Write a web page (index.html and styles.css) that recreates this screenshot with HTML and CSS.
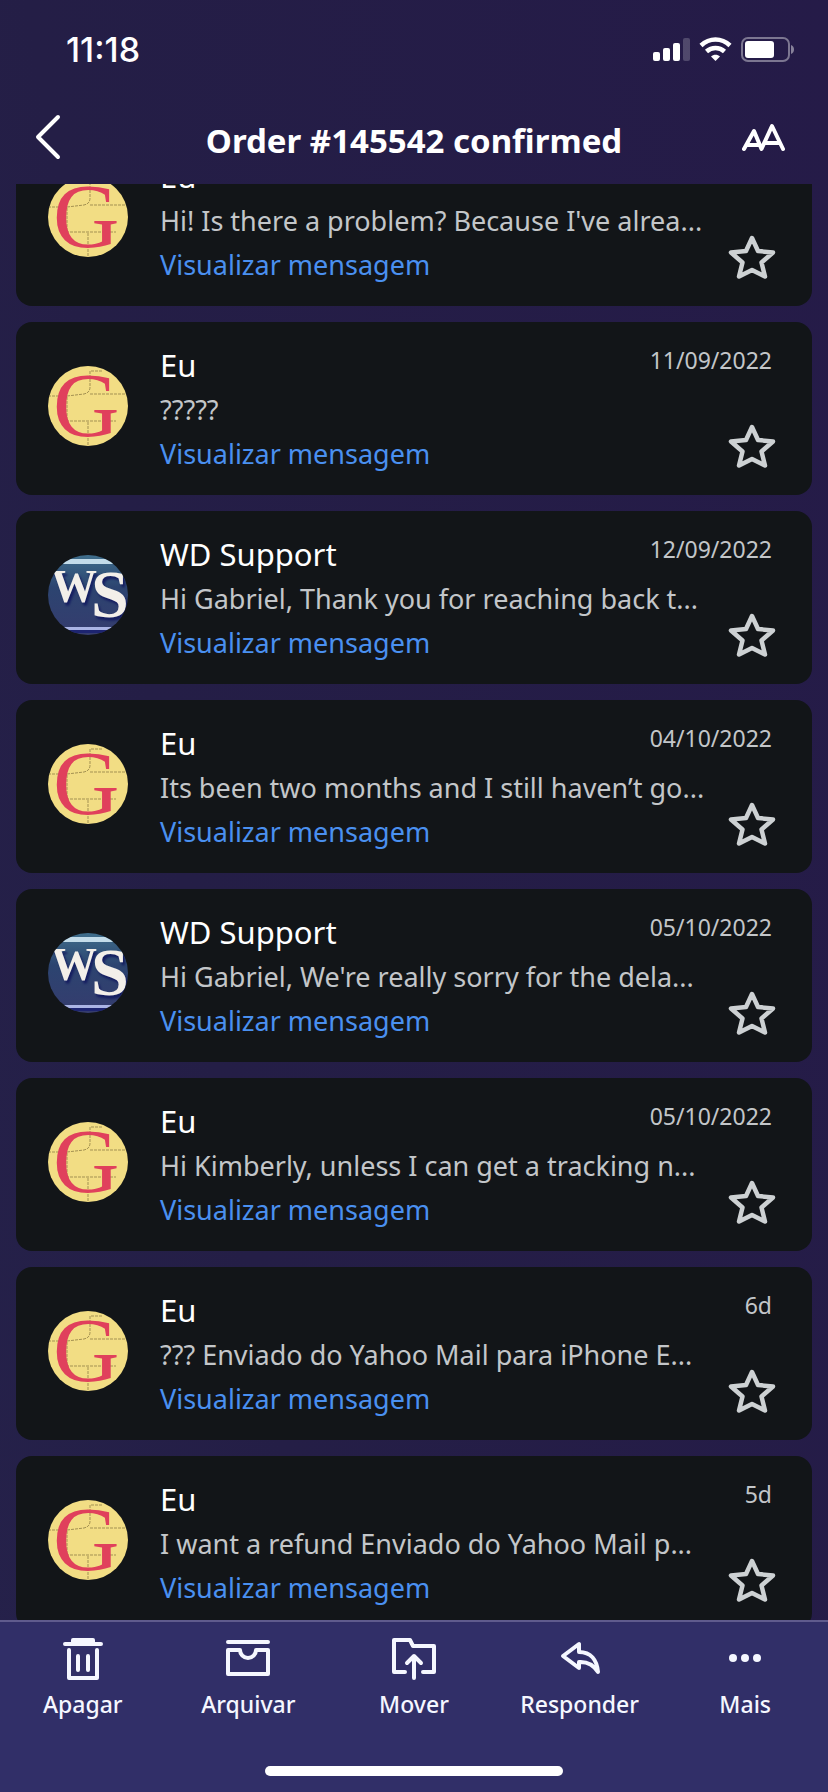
FILE: index.html
```
<!DOCTYPE html>
<html lang="pt">
  <head>
    <meta charset="UTF-8" />
    <meta name="viewport" content="width=device-width, initial-scale=1.0" />
    <title>Order #145542 confirmed</title>
    <link rel="stylesheet" href="styles.css">
  </head>
  <body>
    <!-- Shared drawings -->
    <svg class="defs" aria-hidden="true">
      <symbol id="star" viewBox="0 0 48 48">
        <path d="M24 5l6 13 15 1.500-11.500 10 3.500 14-13-6.500-13 6.500 3.500-14L3 19.500 18 18z" fill="none" stroke="#cdd1d3" stroke-width="4.500" stroke-linejoin="round" />
      </symbol>
      <symbol id="bricks" viewBox="0 0 80 80">
        <path d="M0 0h80v80H0z" fill="#f2dd84" />
        <path d="M0 30h20M54 5H42v16c0 4-2 6-6 7l-17 2v24M42 28h38M14 55h54M40 56v24" fill="none" stroke="#a39152" stroke-width="1" stroke-dasharray="3 1" />
      </symbol>
      <symbol id="wall" viewBox="0 0 80 80">
        <linearGradient id="wall-fill" x1="0" y1="0" x2="0" y2="1">
          <stop offset="0" stop-color="#3f6e8c" />
          <stop offset="0.400" stop-color="#2c4470" />
          <stop offset="1" stop-color="#353c6e" />
        </linearGradient>
        <path d="M0 0h80v80H0z" fill="url(#wall-fill)" />
        <path d="M0 4h80v5H0z" fill="#c3dcea" />
        <path d="M0 72h80v3H0z" fill="#aab4e4" />
        <path d="M0 75h80v3H0z" fill="#1d2470" />
      </symbol>
    </svg>

    <div class="app">
      <header>
        <div class="status-bar">
          <span class="time">11:18</span>
          <svg width="144" height="28" viewBox="0 0 144 28" aria-hidden="true">
            <g fill="#fff">
              <rect x="1" y="16" width="7" height="9" rx="2" />
              <rect x="11" y="12" width="7" height="13" rx="2" />
              <rect x="21" y="7" width="7" height="18" rx="2" />
              <rect x="31" y="2" width="7" height="23" rx="2" opacity="0.2" />
              <path d="M63.500 25l-4.500-4.500c2.500-2.200 6.500-2.200 9 0z" />
              <rect x="93" y="5" width="29" height="17" rx="3" />
              <path d="M139 9c4 1.500 4 7.500 0 9z" opacity="0.45" />
            </g>
            <g fill="none" stroke="#fff">
              <path d="M49 9.500c8.500-8 20.500-8 29 0M54.500 15.500c5.200-4.800 12.800-4.800 18 0" stroke-width="4.500" />
              <rect x="90" y="2" width="47" height="23" rx="6" stroke-width="2" opacity="0.4" />
            </g>
          </svg>
        </div>
        <div class="nav-bar">
          <button type="button" class="icon-button" aria-label="Voltar">
            <svg width="52" height="56" viewBox="0 0 52 56"><path d="M24 5L4 25l20 20" /></svg>
          </button>
          <h1>Order #145542 confirmed</h1>
          <button type="button" class="icon-button" aria-label="Tamanho do texto">
            <svg width="52" height="56" viewBox="0 0 52 56"><path d="M2 37l10-18 7.500 18L30 14l11 23M6 33h12M22 31h16" /></svg>
          </button>
        </div>
      </header>

      <main id="messages">
        <ul class="list">
          <li class="card">
            <svg class="avatar" viewBox="0 0 80 80" aria-hidden="true"><use href="#bricks" /><text class="letter-g" x="5" y="70">G</text></svg>
            <div class="body">
              <div class="top"><h2>Eu</h2><time>10/09/2022</time></div>
              <div class="bottom">
                <div class="text">
                  <p>Hi! Is there a problem? Because I've alrea...</p>
                  <a href="#">Visualizar mensagem</a>
                </div>
                <button type="button" class="star" aria-label="Favorito"><svg><use href="#star" /></svg></button>
              </div>
            </div>
          </li>
          <li class="card">
            <svg class="avatar" viewBox="0 0 80 80" aria-hidden="true"><use href="#bricks" /><text class="letter-g" x="5" y="70">G</text></svg>
            <div class="body">
              <div class="top"><h2>Eu</h2><time>11/09/2022</time></div>
              <div class="bottom">
                <div class="text">
                  <p>?????</p>
                  <a href="#">Visualizar mensagem</a>
                </div>
                <button type="button" class="star" aria-label="Favorito"><svg><use href="#star" /></svg></button>
              </div>
            </div>
          </li>
          <li class="card">
            <svg class="avatar" viewBox="0 0 80 80" aria-hidden="true"><use href="#wall" /><text class="letter-ws" x="3" y="47">W<tspan class="letter-s" x="43" y="62">S</tspan></text></svg>
            <div class="body">
              <div class="top"><h2>WD Support</h2><time>12/09/2022</time></div>
              <div class="bottom">
                <div class="text">
                  <p>Hi Gabriel, Thank you for reaching back t...</p>
                  <a href="#">Visualizar mensagem</a>
                </div>
                <button type="button" class="star" aria-label="Favorito"><svg><use href="#star" /></svg></button>
              </div>
            </div>
          </li>
          <li class="card">
            <svg class="avatar" viewBox="0 0 80 80" aria-hidden="true"><use href="#bricks" /><text class="letter-g" x="5" y="70">G</text></svg>
            <div class="body">
              <div class="top"><h2>Eu</h2><time>04/10/2022</time></div>
              <div class="bottom">
                <div class="text">
                  <p>Its been two months and I still haven’t go...</p>
                  <a href="#">Visualizar mensagem</a>
                </div>
                <button type="button" class="star" aria-label="Favorito"><svg><use href="#star" /></svg></button>
              </div>
            </div>
          </li>
          <li class="card">
            <svg class="avatar" viewBox="0 0 80 80" aria-hidden="true"><use href="#wall" /><text class="letter-ws" x="3" y="47">W<tspan class="letter-s" x="43" y="62">S</tspan></text></svg>
            <div class="body">
              <div class="top"><h2>WD Support</h2><time>05/10/2022</time></div>
              <div class="bottom">
                <div class="text">
                  <p>Hi Gabriel, We're really sorry for the dela...</p>
                  <a href="#">Visualizar mensagem</a>
                </div>
                <button type="button" class="star" aria-label="Favorito"><svg><use href="#star" /></svg></button>
              </div>
            </div>
          </li>
          <li class="card">
            <svg class="avatar" viewBox="0 0 80 80" aria-hidden="true"><use href="#bricks" /><text class="letter-g" x="5" y="70">G</text></svg>
            <div class="body">
              <div class="top"><h2>Eu</h2><time>05/10/2022</time></div>
              <div class="bottom">
                <div class="text">
                  <p>Hi Kimberly, unless I can get a tracking n...</p>
                  <a href="#">Visualizar mensagem</a>
                </div>
                <button type="button" class="star" aria-label="Favorito"><svg><use href="#star" /></svg></button>
              </div>
            </div>
          </li>
          <li class="card">
            <svg class="avatar" viewBox="0 0 80 80" aria-hidden="true"><use href="#bricks" /><text class="letter-g" x="5" y="70">G</text></svg>
            <div class="body">
              <div class="top"><h2>Eu</h2><time>6d</time></div>
              <div class="bottom">
                <div class="text">
                  <p>??? Enviado do Yahoo Mail para iPhone E...</p>
                  <a href="#">Visualizar mensagem</a>
                </div>
                <button type="button" class="star" aria-label="Favorito"><svg><use href="#star" /></svg></button>
              </div>
            </div>
          </li>
          <li class="card">
            <svg class="avatar" viewBox="0 0 80 80" aria-hidden="true"><use href="#bricks" /><text class="letter-g" x="5" y="70">G</text></svg>
            <div class="body">
              <div class="top"><h2>Eu</h2><time>5d</time></div>
              <div class="bottom">
                <div class="text">
                  <p>I want a refund Enviado do Yahoo Mail p...</p>
                  <a href="#">Visualizar mensagem</a>
                </div>
                <button type="button" class="star" aria-label="Favorito"><svg><use href="#star" /></svg></button>
              </div>
            </div>
          </li>
        </ul>
      </main>

      <footer>
        <nav class="toolbar">
          <button type="button">
            <svg viewBox="0 0 48 48"><path d="M6 10h36M14 6h20v3H14zM10 16v28h28V16M19 22v14M29 22v14" /></svg>
            Apagar
          </button>
          <button type="button">
            <svg viewBox="0 0 48 48"><path d="M4 8h40M4 16h12a8 8 0 0 0 16 0h12v24H4z" /></svg>
            Arquivar
          </button>
          <button type="button">
            <svg viewBox="0 0 48 48"><path d="M15 38H4V6h16l3 6h21v26H33M24 44V22M17 29l7-7 7 7" /></svg>
            Mover
          </button>
          <button type="button">
            <svg viewBox="0 0 48 48"><path d="M23 10v8c12 0 18 8 19 20-5-8-11-10.500-19-10v6L7 22z" /></svg>
            Responder
          </button>
          <button type="button">
            <svg viewBox="0 0 48 48"><g fill="#f5f7ff" stroke="none"><circle cx="12" cy="24" r="4" /><circle cx="24" cy="24" r="4" /><circle cx="36" cy="24" r="4" /></g></svg>
            Mais
          </button>
        </nav>
        <div class="home-indicator"></div>
      </footer>
    </div>

    <script>
      // Open the conversation a little way down the list
      document.getElementById("messages").scrollTop = 51;
    </script>
  </body>
</html>
```
FILE: styles.css
```
* {
  box-sizing: border-box;
  margin: 0;
  padding: 0;
}

body {
  background-color: #241c46;
  color: #fff;
  font-family: "Noto Sans", "Open Sans", sans-serif;
}

button {
  background: none;
  border: none;
  color: inherit;
  font-family: inherit;
  cursor: pointer;
}

svg {
  display: block;
}

.defs {
  position: absolute;
  width: 0;
  height: 0;
}

.app {
  display: flex;
  flex-direction: column;
  height: 100vh;
  background: linear-gradient(80deg, #25214a 0%, #241e46 30%, #251b48 100%);
}

/* Header */
.status-bar {
  display: flex;
  justify-content: space-between;
  align-items: center;
  height: 96px;
  padding: 3px 32px 0 66px;
}

.time {
  font-family: Inter, sans-serif;
  font-size: 34px;
  font-weight: 500;
}

.nav-bar {
  display: flex;
  justify-content: space-between;
  align-items: center;
  height: 88px;
  padding: 0 34px;
}

.nav-bar h1 {
  font-size: 33px;
  font-weight: 700;
}

.icon-button path {
  fill: none;
  stroke: #fff;
  stroke-width: 4;
  stroke-linecap: round;
  stroke-linejoin: round;
}

/* Messages */
main {
  flex: 1;
  min-height: 0;
  overflow-y: auto;
  scrollbar-width: none;
}

.list {
  display: flex;
  flex-direction: column;
  gap: 16px;
  padding: 0 16px 16px;
  list-style: none;
}

.card {
  display: flex;
  gap: 32px;
  padding: 22px 36px 19px 32px;
  background-color: #121518;
  border-radius: 16px;
}

.avatar {
  flex: none;
  width: 80px;
  height: 80px;
  margin-top: 22px;
  border-radius: 50%;
}

.letter-g {
  font-family: "Liberation Serif", serif;
  font-size: 92px;
  fill: #e0405c;
}

.letter-ws {
  font-family: "Liberation Serif", serif;
  font-size: 46px;
  font-weight: 700;
  fill: #f3efe9;
  filter: drop-shadow(2px 3px 1px #141c60);
}

.letter-s {
  font-size: 68px;
}

.body {
  flex: 1;
  min-width: 0;
}

.top,
.bottom {
  display: flex;
  justify-content: space-between;
}

.top {
  padding-bottom: 2px;
}

.card h2 {
  font-size: 31px;
  font-weight: 400;
  line-height: 42px;
}

.card time {
  padding-right: 4px;
  color: #c3c6c9;
  font-size: 23px;
  line-height: 32px;
}

.text {
  min-width: 0;
  font-size: 27px;
  line-height: 44px;
  white-space: nowrap;
}

.text p {
  color: #c3c6c9;
}

.text a {
  color: #4a90f0;
  text-decoration: none;
}

.star {
  flex: none;
  align-self: flex-end;
  margin-bottom: 6px;
}

.star svg {
  width: 48px;
  height: 48px;
}

/* Bottom toolbar */
footer {
  padding: 12px 0 16px;
  background-color: #312f68;
  border-top: 2px solid #5f5b8d;
}

.toolbar {
  display: grid;
  grid-template-columns: repeat(5, 1fr);
}

.toolbar button {
  display: flex;
  flex-direction: column;
  align-items: center;
  gap: 4px;
  color: #f5f7ff;
  font-size: 23px;
  font-weight: 500;
  line-height: 36px;
}

.toolbar svg {
  width: 48px;
  height: 48px;
  fill: none;
  stroke: #f5f7ff;
  stroke-width: 4;
  stroke-linecap: round;
  stroke-linejoin: round;
}

.home-indicator {
  width: 36%;
  height: 10px;
  margin: 44px auto 0;
  background-color: #fff;
  border-radius: 5px;
}
```
